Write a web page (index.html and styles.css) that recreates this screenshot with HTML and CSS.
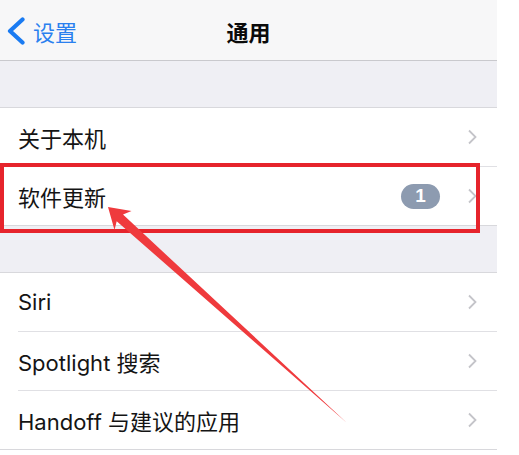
FILE: index.html
```html
<!DOCTYPE html>
<html lang="zh">
<head>
<meta charset="utf-8">
<title>通用</title>
<link rel="stylesheet" href="styles.css">
</head>
<body>
<div class="page">
  <div class="app">
    <header class="nav">
      <div class="nav-back">
        <svg class="back-chevron" width="22" height="28" viewBox="0 0 22 28"><path d="M18.5 2.5 L6 14 L18.5 25.5" fill="none" stroke="#1a7bf2" stroke-width="4.2" stroke-linecap="round" stroke-linejoin="round"/></svg>
        <span class="back-label">设置</span>
      </div>
      <div class="nav-title">通用</div>
      <div class="nav-spacer"></div>
    </header>
    <div class="gap"></div>
    <section class="group">
      <div class="row"><span class="label">关于本机</span><span class="chev"><svg width="11" height="16" viewBox="0 0 11 16"><path d="M2 1.5 L8.5 8 L2 14.5" fill="none" stroke="#c4c4c9" stroke-width="1.8"/></svg></span></div>
      <div class="row"><span class="label">软件更新</span><span class="badge">1</span><span class="chev"><svg width="11" height="16" viewBox="0 0 11 16"><path d="M2 1.5 L8.5 8 L2 14.5" fill="none" stroke="#c4c4c9" stroke-width="1.8"/></svg></span></div>
    </section>
    <div class="gap"></div>
    <section class="group">
      <div class="row"><span class="label">Siri</span><span class="chev"><svg width="11" height="16" viewBox="0 0 11 16"><path d="M2 1.5 L8.5 8 L2 14.5" fill="none" stroke="#c4c4c9" stroke-width="1.8"/></svg></span></div>
      <div class="row"><span class="label">Spotlight 搜索</span><span class="chev"><svg width="11" height="16" viewBox="0 0 11 16"><path d="M2 1.5 L8.5 8 L2 14.5" fill="none" stroke="#c4c4c9" stroke-width="1.8"/></svg></span></div>
      <div class="row"><span class="label">Handoff 与建议的应用</span><span class="chev"><svg width="11" height="16" viewBox="0 0 11 16"><path d="M2 1.5 L8.5 8 L2 14.5" fill="none" stroke="#c4c4c9" stroke-width="1.8"/></svg></span></div>
    </section>
  </div>
  <div class="highlight"></div>
  <svg class="arrow" width="519" height="455" viewBox="0 0 519 455"><polygon points="108,207 131.5,211 123,214.6 347,423 116.7,221.2 114.5,230" fill="#ef3a3d"/></svg>
</div>
</body>
</html>
```

FILE: styles.css
```css
html, body {
  margin: 0;
  padding: 0;
  background: #ffffff;
}
.page {
  position: relative;
  width: 519px;
  height: 455px;
  overflow: hidden;
  font-family: Inter, "Noto Sans CJK SC", sans-serif;
  color: #111111;
}
.app {
  width: 497px;
  background: #ffffff;
}
.nav {
  height: 60px;
  border-bottom: 1px solid #c9c9cd;
  background: #f7f7f8;
  display: grid;
  grid-template-columns: 1fr auto 1fr;
  align-items: center;
}
.nav-back {
  display: flex;
  align-items: center;
  padding-left: 4px;
  gap: 7px;
  margin-top: 2px;
}
.back-chevron {
  display: block;
}
.back-label {
  font-size: 22px;
  color: #2a80ef;
}
.nav-title {
  font-size: 22px;
  font-weight: 600;
  color: #0b0b0b;
  margin-top: 2px;
}
.gap {
  height: 46px;
  background: #efeff4;
}
.group {
  border-top: 1px solid #d8d8dc;
  border-bottom: 1px solid #d8d8dc;
  background: #ffffff;
  padding-left: 18px;
}
.row {
  height: 58px;
  display: flex;
  align-items: center;
  padding-right: 19px;
  border-bottom: 1px solid #e0e0e4;
}
.row:last-child {
  border-bottom: none;
}
.label {
  flex: 1;
  font-size: 22px;
  color: #141414;
}
.badge {
  width: 39px;
  height: 25px;
  border-radius: 13px;
  background: #8d9bb0;
  color: #ffffff;
  font-size: 19px;
  font-weight: 700;
  display: flex;
  align-items: center;
  justify-content: center;
  margin-right: 27px;
  font-family: "Liberation Sans", sans-serif;
}
.chev svg {
  display: block;
}
.highlight {
  position: absolute;
  left: 0;
  top: 163px;
  width: 480px;
  height: 70px;
  box-sizing: border-box;
  border: 4px solid #e6242c;
}
.arrow {
  position: absolute;
  left: 0;
  top: 0;
  pointer-events: none;
}
```
